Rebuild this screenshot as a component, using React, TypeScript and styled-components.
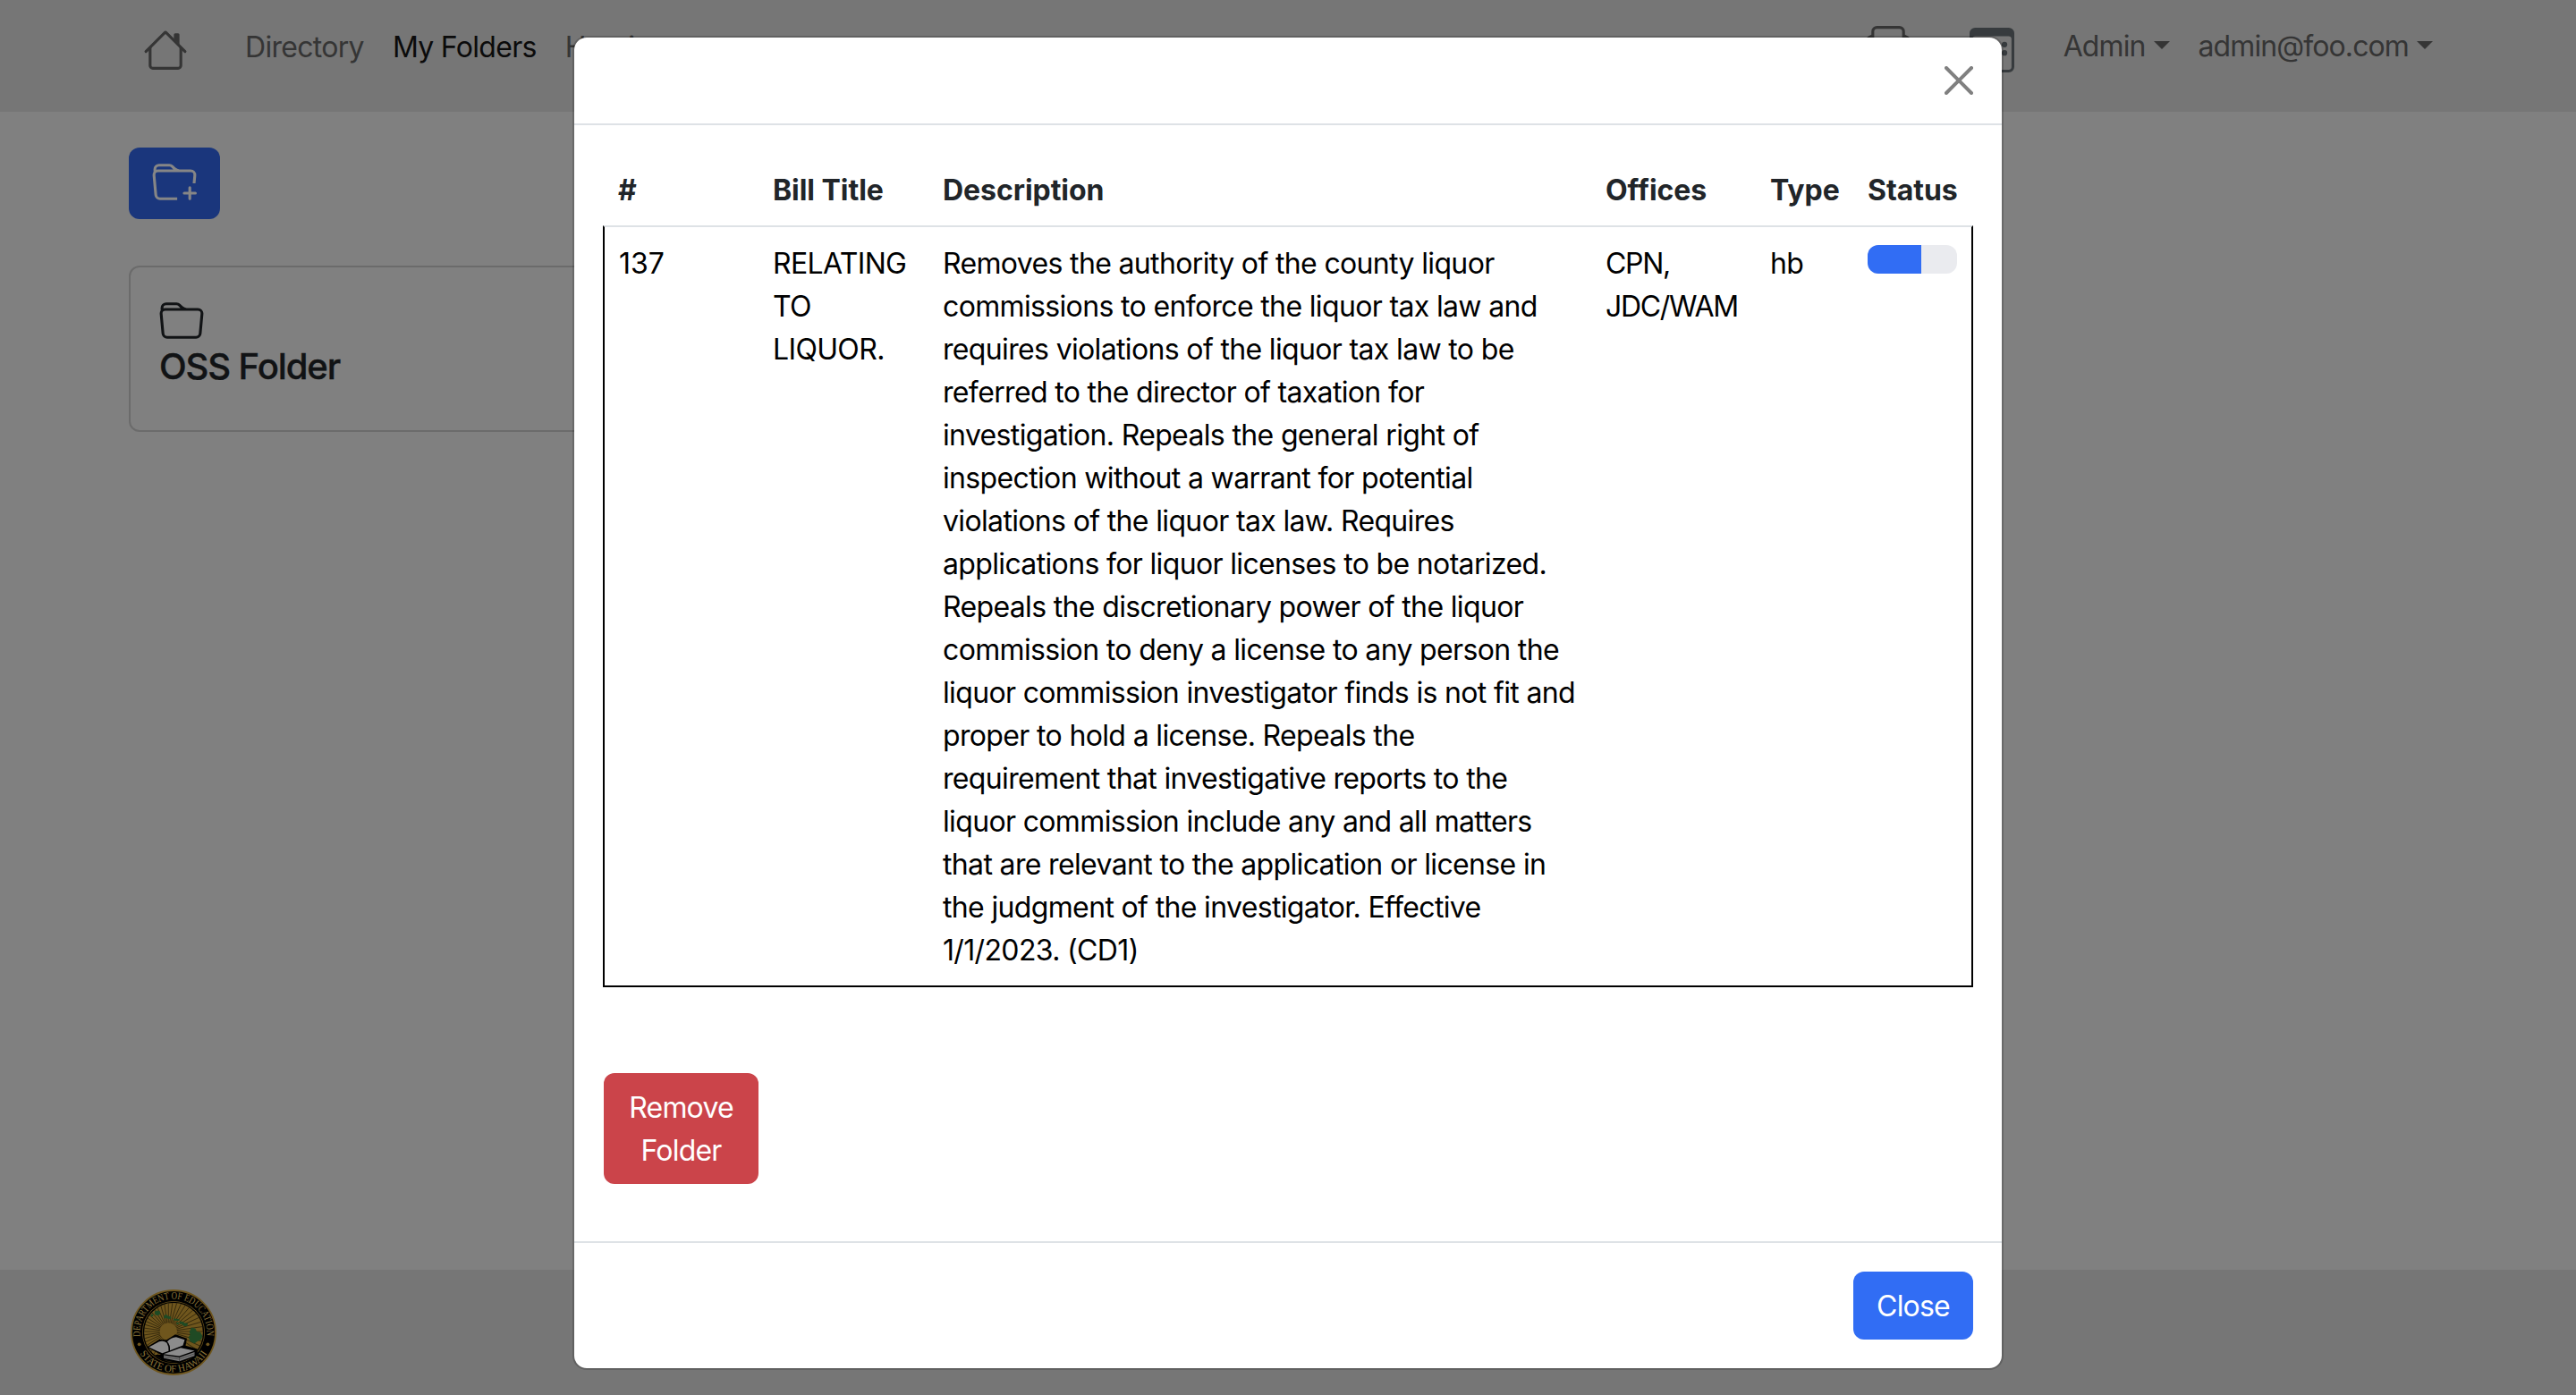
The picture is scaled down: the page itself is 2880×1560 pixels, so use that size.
import React from 'react';
import styled, { createGlobalStyle } from 'styled-components';
import { BsFolder, BsFolderPlus, BsCalendar3, BsEnvelopePaper } from 'react-icons/bs';

const Global = createGlobalStyle`
  * { box-sizing: border-box; }
  body { margin: 0; background: #808080; font-family: Inter, "Liberation Sans", sans-serif; font-size: 32px; line-height: 48px; color: #212529; }
`;

const Page = styled.div`
  position: relative;
  height: 1560px;
  overflow: hidden;
  display: flex;
  flex-direction: column;
  background: #808080;
`;

const Navbar = styled.nav`
  height: 125px;
  background: #767676;
  display: flex;
  align-items: flex-start;
  padding: 29px 160px 0 160px;
  color: #353535;
`;

const HomeLink = styled.a`
  display: flex;
  width: 114px;
  padding-top: 2px;
`;

const NavLink = styled.a<{ $active?: boolean; $spacing?: number }>`
  color: ${(p) => (p.$active ? '#0b0b0b' : '#353535')};
  margin-right: 32px;
  white-space: nowrap;
  letter-spacing: ${(p) => p.$spacing ?? -0.7}px;
`;

const IconLink = styled.a<{ $gap: number; $drop?: number; $tone?: string }>`
  display: flex;
  margin-right: ${(p) => p.$gap}px;
  padding-top: ${(p) => p.$drop ?? 0}px;
  color: ${(p) => p.$tone ?? '#353535'};
`;

const UserMenu = styled.div`
  display: flex;
  gap: 32px;
  margin-top: -1px;
`;

const MenuToggle = styled.a<{ $spacing: number }>`
  color: #353535;
  white-space: nowrap;
  letter-spacing: ${(p) => p.$spacing}px;
`;

const Caret = styled.i`
  display: inline-block;
  margin-left: 9px;
  vertical-align: 8.160px;
  border-top: 9.600px solid;
  border-left: 9.600px solid transparent;
  border-right: 9.600px solid transparent;
`;

const Spacer = styled.div`
  flex: 1;
`;

const Main = styled.main`
  flex: 1;
  padding: 40px 144px;
`;

const AddButton = styled.button`
  display: flex;
  align-items: center;
  justify-content: center;
  width: 102px;
  height: 80px;
  padding: 0;
  border: 0;
  border-radius: 12px;
  background: #1a367c;
  color: #868686;
`;

const Card = styled.section`
  margin-top: 52px;
  width: 840px;
  height: 186px;
  padding: 36px 32px;
  border: 2px solid #6b6b6b;
  border-radius: 12px;
  color: #111315;
`;

const CardTitle = styled.h5`
  margin: 1px 0 0;
  font-size: 40px;
  line-height: 48px;
  font-weight: 500;
  letter-spacing: -1.1px;
  -webkit-text-stroke: 0.400px currentColor;
`;

const Footer = styled.footer`
  height: 140px;
  background: #767676;
  padding: 21px 145px;
`;

const Dialog = styled.div`
  position: absolute;
  left: 640px;
  top: 40px;
  width: 1600px;
  display: flex;
  flex-direction: column;
  background: #fff;
  background-clip: padding-box;
  border: 2px solid rgba(0, 0, 0, 0.175);
  border-radius: 16px;
`;

const DialogHeader = styled.header`
  height: 98px;
  padding: 32px;
  display: flex;
  justify-content: flex-end;
  border-bottom: 2px solid #dee2e6;
`;

const DialogBody = styled.div`
  padding: 32px;
`;

const DialogFooter = styled.footer`
  display: flex;
  justify-content: flex-end;
  padding: 32px;
  border-top: 2px solid #dee2e6;
`;

const Table = styled.table`
  width: 1532px;
  table-layout: fixed;
  border-collapse: separate;
  border-spacing: 0;
`;

const Th = styled.th`
  height: 80px;
  padding: 17px 0 15px 16px;
  text-align: left;
  font-weight: 700;
  white-space: nowrap;
  letter-spacing: -0.05px;
  &:first-child { padding-left: 17px; }
`;

const Td = styled.td<{ $spacing?: number }>`
  padding: 17px 0 15px 16px;
  vertical-align: top;
  color: #000;
  white-space: nowrap;
  letter-spacing: ${(p) => p.$spacing ?? -0.65}px;
  border-top: 2px solid #dee2e6;
  border-bottom: 2px solid #000;
  &:first-child { border-left: 2px solid #000; padding-left: 16px; }
  &:last-child { border-right: 2px solid #000; padding-right: 16px; }
`;

const Progress = styled.div`
  width: 100px;
  height: 32px;
  margin-top: 3px;
  border-radius: 12px;
  overflow: hidden;
  background: #eaebef;
`;

const Bar = styled.div`
  width: 60%;
  height: 100%;
  background: #316df4;
`;

const Button = styled.button`
  display: block;
  width: 134px;
  padding: 15px 0 13px;
  border: 0;
  border-radius: 12px;
  background: #316df4;
  color: #fff;
  font: inherit;
  letter-spacing: -0.8px;
`;

const RemoveButton = styled(Button)`
  width: 173px;
  margin: 96px 0 32px 1px;
  background: #cb444a;
`;

const columns = [
  ['#', 174],
  ['Bill Title', 190],
  ['Description', 741],
  ['Offices', 184],
  ['Type', 109],
  ['Status', 134],
] as const;

const description = [
  'Removes the authority of the county liquor',
  'commissions to enforce the liquor tax law and',
  'requires violations of the liquor tax law to be',
  'referred to the director of taxation for',
  'investigation. Repeals the general right of',
  'inspection without a warrant for potential',
  'violations of the liquor tax law. Requires',
  'applications for liquor licenses to be notarized.',
  'Repeals the discretionary power of the liquor',
  'commission to deny a license to any person the',
  'liquor commission investigator finds is not fit and',
  'proper to hold a license. Repeals the',
  'requirement that investigative reports to the',
  'liquor commission include any and all matters',
  'that are relevant to the application or license in',
  'the judgment of the investigator. Effective',
  '1/1/2023. (CD1)',
];

const Lines = ({ items }: { items: string[] }) => (
  <>
    {items.map((l, i) => (
      <React.Fragment key={l}>
        {i > 0 && <br />}
        {l}
      </React.Fragment>
    ))}
  </>
);

const HouseIcon = () => (
  <svg width="50" height="50" viewBox="0 0 16 16" fill="currentColor">
    <path fillRule="evenodd" d="M2 13.500V7h1v6.500a.5.5 0 0 0 .5.5h9a.5.5 0 0 0 .5-.5V7h1v6.500a1.500 1.500 0 0 1-1.500 1.500h-9A1.500 1.500 0 0 1 2 13.500zm11-11V6l-2-2V2.500a.5.5 0 0 1 .5-.5h1a.5.5 0 0 1 .5.5z" />
    <path fillRule="evenodd" d="M7.293 1.500a1 1 0 0 1 1.414 0l6.647 6.646a.5.5 0 0 1-.708.708L8 2.207 1.354 8.854a.5.5 0 1 1-.708-.708L7.293 1.500z" />
  </svg>
);

const CloseIcon = () => (
  <svg width="32" height="32" viewBox="0 0 16 16" fill="#808080">
    <path d="M.293.293a1 1 0 0 1 1.414 0L8 6.586 14.293.293a1 1 0 1 1 1.414 1.414L9.414 8l6.293 6.293a1 1 0 0 1-1.414 1.414L8 9.414l-6.293 6.293a1 1 0 0 1-1.414-1.414L6.586 8 .293 1.707a1 1 0 0 1 0-1.414z" />
  </svg>
);

const rays = Array.from({ length: 44 }, (_, i) => (i * 360) / 44);

const Seal = () => (
  <svg width="98" height="98" viewBox="0 0 98 98">
    <defs>
      <clipPath id="disc"><circle cx="49" cy="49" r="33" /></clipPath>
      <path id="arcTop" d="M11.780 53.570A37.500 37.500 0 1 1 86.220 53.570" />
      <path id="arcBottom" d="M4.500 49a44.500 44.500 0 0 0 89 0" />
    </defs>
    <circle cx="49" cy="49" r="47" fill="#000" stroke="#6f561d" strokeWidth="1.8" />
    <circle cx="49" cy="49" r="35" fill="#6f561d" />
    <circle cx="49" cy="49" r="33.600" fill="none" stroke="#000" strokeWidth="1.4" />
    <g clipPath="url(#disc)">
      {rays.map((a) => (
        <path key={a} d="M43.300 48V-12" stroke="#120e04" strokeWidth="0.55" transform={`rotate(${a} 43.3 48)`} />
      ))}
      <circle cx="43.3" cy="48" r="9.800" fill="#6f561d" />
      <g fill="#1f4a24">
        <ellipse cx="31" cy="27.300" rx="3.200" ry="2.700" />
        <circle cx="25" cy="30" r="1.400" />
        <path d="M38 31l2.500-2.500 2 2 3.500.8.500 2-3 1-2-1.300-3 .5zM49 33.500l6 .4 1 1.800-3 .4-4-.6zM52.500 37.500l2.500.5-.8 2.400-2-.8zM56 36.600l3.500.4 2 1.400 3.500.6-.6 2.700-3.600.2-3-2.300-2 .2z" />
        <path d="M69 43.600l4.500 1.200 1.500 3.200 4 .8 2.400 4.200-1.400 4-4 1.800-3.700 2.800-4.800-2.600-1.800-4.700 2-2.500-1-3.200z" />
      </g>
      <path d="M28 74h12v12H40z" fill="#000" />
    </g>
    <path d="M19 65.500L33 57l8 .6L51 51.300l13 4.500-1.500 8 13 3.800.5 7.400L55 83.600l-20-4v-5.600z" fill="#000" />
    <path d="M21.500 65.500L33 59.300q5-1.500 8.500 1.500 2.500 4 2 9L36.500 72.300 30 69.500z" fill="#8c8c8c" />
    <path d="M42 59.300Q46 54.800 52 54.300L61.500 57.300 59.500 63.600 45 69.200Q45.500 63 42 59.300z" fill="#8c8c8c" />
    <path d="M38 73.300L57 66.300 72.500 69.600 55.500 75.600z" fill="#8c8c8c" />
    <path d="M38 74.600L55.500 77 72.500 71v4.300L55.500 81.300 38 77.800z" fill="#777" />
    <path d="M38 76.300l17.500 2.600 17-6M55.500 77v4" stroke="#2c2c2c" strokeWidth="0.5" fill="none" />
    <circle cx="10.700" cy="62.300" r="1.900" fill="#6f561d" />
    <circle cx="87.300" cy="62.300" r="1.900" fill="#6f561d" />
    <g fill="#8a7338" fontFamily="Liberation Serif, serif" fontSize="11.500">
      <text textLength="126" lengthAdjust="spacingAndGlyphs"><textPath href="#arcTop" startOffset="0" textLength="126" lengthAdjust="spacingAndGlyphs">DEPARTMENT OF EDUCATION</textPath></text>
      <text textAnchor="middle"><textPath href="#arcBottom" startOffset="50%" textLength="90" lengthAdjust="spacingAndGlyphs">STATE OF HAWAII</textPath></text>
    </g>
  </svg>
);

export default function App() {
  return (
    <Page>
      <Global />
      <Navbar>
        <HomeLink><HouseIcon /></HomeLink>
        <NavLink>Directory</NavLink>
        <NavLink $active>My Folders</NavLink>
        <NavLink>Hearings</NavLink>
        <Spacer />
        <IconLink $gap={66}><BsEnvelopePaper size={50} /></IconLink>
        <IconLink $gap={55} $drop={2} $tone="#373b3e"><BsCalendar3 size={50} /></IconLink>
        <UserMenu>
          <MenuToggle $spacing={-0.9}>Admin<Caret /></MenuToggle>
          <MenuToggle $spacing={-0.9}>admin@foo.com<Caret /></MenuToggle>
        </UserMenu>
      </Navbar>
      <Main>
        <AddButton><BsFolderPlus size={50} /></AddButton>
        <Card>
          <BsFolder size={50} display="block" />
          <CardTitle>OSS Folder</CardTitle>
        </Card>
      </Main>
      <Footer><Seal /></Footer>
      <Dialog>
        <DialogHeader><CloseIcon /></DialogHeader>
        <DialogBody>
          <Table>
            <colgroup>{columns.map(([n, w]) => <col key={n} width={w} />)}</colgroup>
            <thead><tr>{columns.map(([n]) => <Th key={n}>{n}</Th>)}</tr></thead>
            <tbody>
              <tr>
                <Td $spacing={0}>137</Td>
                <Td><Lines items={['RELATING', 'TO', 'LIQUOR.']} /></Td>
                <Td><Lines items={description} /></Td>
                <Td $spacing={-1.3}><Lines items={['CPN,', 'JDC/WAM']} /></Td>
                <Td>hb</Td>
                <Td><Progress><Bar /></Progress></Td>
              </tr>
            </tbody>
          </Table>
          <RemoveButton>Remove<br />Folder</RemoveButton>
        </DialogBody>
        <DialogFooter><Button>Close</Button></DialogFooter>
      </Dialog>
    </Page>
  );
}
